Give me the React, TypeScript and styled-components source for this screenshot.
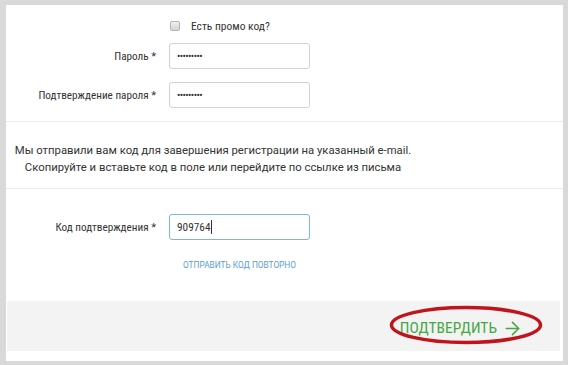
import styled, { createGlobalStyle } from 'styled-components';
import { ArrowRight } from 'lucide-react';

const GlobalStyle = createGlobalStyle`
  html, body {
    margin: 0;
    padding: 0;
  }
  body {
    background: #d9d9d9;
    font-family: "Roboto Condensed", Roboto, "Liberation Sans", sans-serif;
    color: #333;
  }
`;

export default function App() {
  return (
    <>
      <GlobalStyle />
      <Frame>
        <Card>
          <TopSection>
            <PromoRow>
              <span />
              <CheckLabel>
                <Checkbox type="checkbox" />
                Есть промо код?
              </CheckLabel>
            </PromoRow>
            <FieldRow>
              <Label>Пароль *</Label>
              <Input type="password" defaultValue="123456789" readOnly />
            </FieldRow>
            <FieldRow>
              <Label>Подтверждение пароля *</Label>
              <Input type="password" defaultValue="123456789" readOnly />
            </FieldRow>
          </TopSection>

          <MessageSection>
            <Message>
              Мы отправили вам код для завершения регистрации на указанный e-mail.
              <br />
              Скопируйте и вставьте код в поле или перейдите по ссылке из письма
            </Message>
          </MessageSection>

          <CodeSection>
            <FieldRow>
              <Label>Код подтверждения *</Label>
              <CodeField>
                909764
                <Caret />
              </CodeField>
            </FieldRow>
            <FieldRow>
              <span />
              <ResendLink href="#">Отправить код повторно</ResendLink>
            </FieldRow>
          </CodeSection>

          <Footer>
            <SubmitButton>
              Подтвердить
              <ArrowRight size={21} strokeWidth={1.8} />
              <Highlight viewBox="0 0 154 40" width={154} height={40}>
                <ellipse cx="77" cy="20" rx="74.5" ry="17.5" fill="none" stroke="#c0141c" strokeWidth="3.5" />
              </Highlight>
            </SubmitButton>
          </Footer>
        </Card>
      </Frame>
    </>
  );
}

const Frame = styled.div`
  width: 568px;
  height: 365px;
  box-sizing: border-box;
  padding: 5px 5px 4px 6px;
`;

const Card = styled.div`
  height: 100%;
  background: #fff;
  display: flex;
  flex-direction: column;
`;

const TopSection = styled.div`
  display: flex;
  flex-direction: column;
  gap: 13px;
  padding: 14px 0 13px;
  border-bottom: 1px solid #ebebeb;
`;

const PromoRow = styled.div`
  display: grid;
  grid-template-columns: 150px 141px;
  column-gap: 13px;
  height: 14px;
  margin: 0 0 -3px;
  align-items: center;
`;

const CheckLabel = styled.label`
  display: flex;
  align-items: center;
  gap: 11px;
  font-size: 11.5px;
  line-height: 14px;
  margin-left: 1px;
`;

const Checkbox = styled.input`
  appearance: none;
  margin: 0;
  width: 10px;
  height: 10px;
  border: 1px solid #b4b4b4;
  border-radius: 2px;
  background: linear-gradient(#f0f0f0, #d4d4d4);
  box-sizing: border-box;
`;

const FieldRow = styled.div`
  display: grid;
  grid-template-columns: 150px 141px;
  column-gap: 13px;
  align-items: center;
`;

const Label = styled.label`
  text-align: right;
  font-size: 11.2px;
`;

const Input = styled.input`
  width: 141px;
  height: 26px;
  box-sizing: border-box;
  margin: 0;
  border: 1px solid #d2d2d2;
  border-radius: 3px;
  padding: 0 7px;
  font-family: Roboto, sans-serif;
  font-size: 10px;
  letter-spacing: -0.6px;
  color: #333;
  outline: none;
`;

const CodeField = styled.div`
  display: flex;
  align-items: center;
  width: 141px;
  height: 26px;
  box-sizing: border-box;
  border: 1px solid #7fb6de;
  border-radius: 3px;
  padding: 0 7px;
  font-size: 11.3px;
`;

const Caret = styled.span`
  width: 1px;
  height: 14px;
  margin-left: 1px;
  background: #333;
`;

const MessageSection = styled.div`
  padding: 20px 0 12px;
  border-bottom: 1px solid #ebebeb;
`;

const Message = styled.p`
  margin: 0;
  width: 414px;
  text-align: center;
  font-family: Roboto, sans-serif;
  font-size: 11.3px;
  line-height: 17px;
`;

const CodeSection = styled.div`
  flex: 1;
  display: flex;
  flex-direction: column;
  gap: 20px;
  padding-top: 25px;
`;

const ResendLink = styled.a`
  justify-self: center;
  font-family: Roboto, sans-serif;
  font-size: 8.3px;
  line-height: 10px;
  text-transform: uppercase;
  text-decoration: none;
  color: #5a9cd0;
`;

const Footer = styled.div`
  height: 50px;
  margin: 0 3px 10px 1px;
  background: #f3f3f3;
  display: flex;
  justify-content: flex-end;
  align-items: center;
  padding-right: 37px;
`;

const SubmitButton = styled.button`
  position: relative;
  display: flex;
  align-items: center;
  gap: 5px;
  border: 0;
  padding: 0;
  background: none;
  font-family: "Roboto Condensed", Roboto, sans-serif;
  font-size: 15.5px;
  text-transform: uppercase;
  color: #45a845;
  margin-top: 4px;
`;

const Highlight = styled.svg`
  position: absolute;
  left: -11px;
  top: -13px;
  pointer-events: none;
`;
